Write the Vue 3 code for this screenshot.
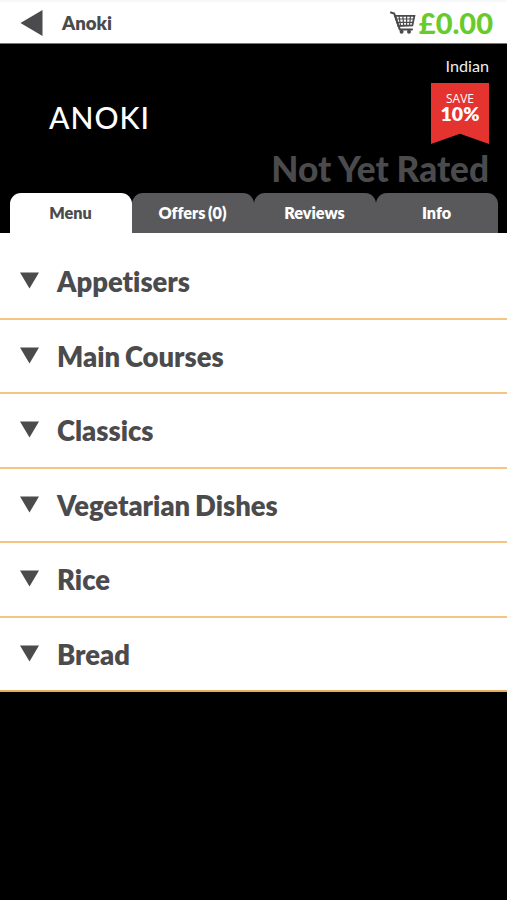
<script setup>
const tabs = ['Menu', 'Offers (0)', 'Reviews', 'Info']
const categories = ['Appetisers', 'Main Courses', 'Classics', 'Vegetarian Dishes', 'Rice', 'Bread']
</script>

<template>
  <main class="screen">
    <header class="topbar">
      <svg class="back" viewBox="0 0 22 26"><path d="M0 13 22 0V26Z" fill="#4b4b4d" /></svg>
      <span class="title">Anoki</span>
      <div class="basket">
        <svg class="cart" viewBox="0 0 26 24" fill="none" stroke="#4b4b4d">
          <path d="M.9 1.5 4.2 2.6 9.8 18.4H22" stroke-width="2" stroke-linecap="round" />
          <path d="M5.2 4.8H24.4L22.4 14.4 8.4 15Z" stroke-width="1.8" />
          <path d="M6 8H23.8M6.8 11.4H23M9 4.8l1.6 10M12.8 4.8l.9 10M16.6 4.8v10M20.5 4.8l-1 9.8" stroke-width="1.2" />
          <circle cx="11.6" cy="20.8" r="2" fill="#4b4b4d" stroke="none" />
          <circle cx="19" cy="20.8" r="2" fill="#4b4b4d" stroke="none" />
        </svg>
        <span class="total">£0.00</span>
      </div>
    </header>

    <section class="hero">
      <div class="brand"><span>ANOKI</span></div>
      <div class="details">
        <span class="cuisine">Indian</span>
        <div class="ribbon"><span class="save">SAVE</span><span class="percent">10%</span></div>
        <span class="rating">Not Yet Rated</span>
      </div>
    </section>

    <nav class="tabs">
      <div v-for="(tab, i) in tabs" :key="tab" class="tab" :class="{ active: i === 0 }"><span>{{ tab }}</span></div>
    </nav>

    <ul class="menu">
      <li v-for="category in categories" :key="category" class="row">
        <svg class="arrow" viewBox="0 0 20 17"><path d="M0 0H20L10 17Z" fill="#4b4b4d" /></svg>
        <span>{{ category }}</span>
      </li>
    </ul>
  </main>
</template>

<style>
body { margin: 0; background: #000; }
</style>

<style scoped>
.screen { width: 507px; height: 900px; overflow: hidden; background: #000; color: #4b4b4d; font-family: Lato, sans-serif; font-variant-ligatures: none; }
.topbar { box-sizing: border-box; height: 44px; display: flex; align-items: flex-start; padding: 0 14px 0 20px; background: #fff; border-top: 2px solid #f8f8f8; border-bottom: 1px solid #777; }
.back { width: 23px; height: 26px; margin-top: 8px; }
.title { margin: 9px 0 0 19px; font-size: 18.6px; line-height: 24px; font-weight: 800; }
.basket { display: flex; margin-left: auto; }
.cart { width: 26px; height: 24px; margin: 9px 3px 0 0; }
.total { margin-top: 4px; font-size: 29px; line-height: 34px; font-weight: 900; letter-spacing: 0; color: #69cb2b; }
.hero { display: flex; justify-content: space-between; height: 149px; padding: 0 18px 0 49px; box-sizing: border-box; }
.brand { padding-top: 55px; color: #fff; font-size: 30px; line-height: 36px; font-weight: 500; letter-spacing: 1px; }
.details { display: flex; flex-direction: column; align-items: flex-end; }
.cuisine { margin-top: 12px; color: #eee; font-size: 16.2px; line-height: 20px; }
.ribbon { display: flex; flex-direction: column; align-items: center; width: 58px; height: 61px; margin-top: 7px; background: #e5332f; clip-path: polygon(0 0, 100% 0, 100% 100%, 50% 83%, 0 100%); color: #fff; }
.save { margin-top: 10px; font-size: 12px; line-height: 12px; font-family: "Open Sans", sans-serif; }
.percent { font-size: 19.5px; line-height: 18px; font-weight: 800; }
.rating { margin-top: 3px; font-size: 35.2px; line-height: 42px; font-weight: 900; color: #4b4b4d; white-space: nowrap; word-spacing: -0.5px; }
.tabs { display: flex; height: 40px; padding: 0 9px 0 10px; }
.tab { flex: 1; box-sizing: border-box; padding: 9px 1px 0 0; border-radius: 11px 11px 0 0; background: #59595b; text-align: center; color: #fff; font-size: 16.2px; line-height: 22px; font-weight: 800; word-spacing: -1.2px; }
.tab.active { background: #fff; color: #4b4b4d; }
.menu { margin: 0; padding: 12px 0 0; list-style: none; background: #fff; }
.row { display: flex; align-items: flex-start; box-sizing: border-box; height: 74.5px; padding: 20px 20px 0; border-bottom: 2px solid #f4c581; font-size: 27.4px; line-height: 34px; font-weight: 800; word-spacing: -1.5px; }
.row:last-child { border-bottom-color: #e5ad5c; }
.arrow { width: 19px; height: 17px; margin: 7px 18px 0 0; }
</style>
